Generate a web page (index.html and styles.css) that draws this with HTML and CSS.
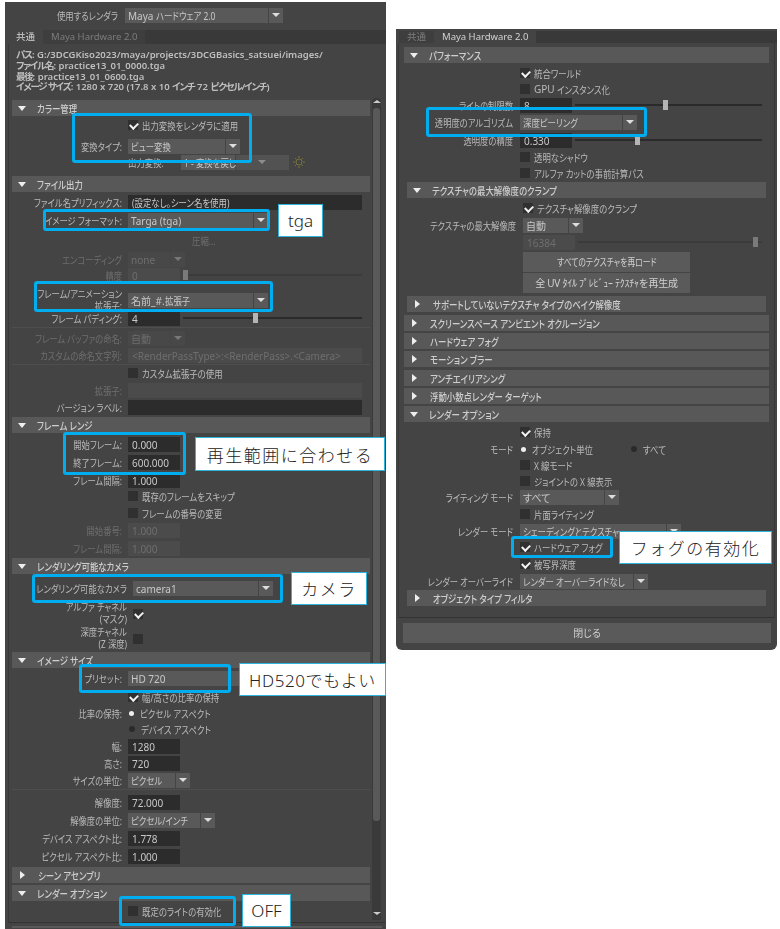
FILE: index.html
```html
<!DOCTYPE html>
<html lang="ja">
<head>
    <meta charset="UTF-8">
    <title>レンダー設定</title>
    <link rel="stylesheet" href="styles.css">
</head>
<body>
<div class="sheet">

    <!-- 共通タブ -->
    <div class="panel panel-left">
        <div class="row renderer">
            <span class="lbl">使用するレンダラ</span>
            <div class="dd w158"><span class="dd-text">Maya <span class="jp">ハードウェア 2.0</span></span><span class="dd-arrow"></span></div>
        </div>
        <div class="tabs">
            <span class="tab tab-on">共通</span>
            <span class="tab">Maya Hardware 2.0</span>
        </div>
        <div class="tab-body">
            <div class="info">
                <div><span class="kn">パス</span>: G:/3DCGKiso2023/maya/projects/3DCGBasics_satsuei/images/</div>
                <div><span class="kn">ファイル名</span>: practice13_01_0000.tga</div>
                <div><span class="kn">最後</span>: practice13_01_0600.tga</div>
                <div><span class="kn">イメージ サイズ</span>: 1280 x 720 (17.8 x 10 <span class="kn">インチ</span> 72 <span class="kn">ピクセル/インチ</span>)</div>
            </div>
            <div class="scroll-area">
                <div class="scroll-content">
                    <div class="hdr"><i class="tri"></i><span>カラー管理</span></div>
                    <div class="row mt1"><div class="ctl"><i class="chk on"></i><span class="jp">出力変換をレンダラに適用</span></div></div>
                    <div class="row mt5"><span class="lbl">変換タイプ:</span><div class="dd w112"><span class="dd-text"><span class="jp">ビュー変換</span></span><span class="dd-arrow"></span></div></div>
                    <div class="row"><div class="ctl"><span class="out-lbl">出力変換:</span><div class="dd dd-split w108"><span class="dd-text"><span class="jp">1 - 変換を戻し</span></span><span class="dd-arrow"></span></div>
                        <svg class="sun" viewBox="0 0 12 12"><circle cx="6" cy="6" r="3" fill="none" stroke="#77743f"/><path d="M6 0v2M6 10v2M0 6h2M10 6h2M2 2l1.400 1.400M8.600 8.600L10 10M2 10l1.400-1.400M8.600 3.400L10 2" stroke="#77743f"/></svg></div></div>

                    <div class="hdr mt6"><i class="tri"></i><span>ファイル出力</span></div>
                    <div class="row mt2"><span class="lbl">ファイル名プリフィックス:</span><div class="field fill"><span class="jp">(設定なし。シーン名を使用)</span></div></div>
                    <div class="row mt2"><span class="lbl">イメージ フォーマット:</span><div class="dd w140"><span class="dd-text">Targa (tga)</span><span class="dd-arrow"></span></div></div>
                    <div class="row mt4"><div class="ctl off press"><span class="jp">圧縮...</span></div></div>
                    <div class="row mt3 off"><span class="lbl">エンコーディング</span><div class="dd dd-off w57"><span class="dd-text">none</span><span class="dd-arrow"></span></div></div>
                    <div class="row off"><span class="lbl">精度</span><div class="ctl"><div class="field field-off num">0</div><div class="slider"><i style="left:0%"></i></div></div></div>
                    <div class="row mt6"><span class="lbl two">フレーム/アニメーション<br>拡張子:</span><div class="dd w140"><span class="dd-text">名前_#.<span class="jp">拡張子</span></span><span class="dd-arrow"></span></div></div>
                    <div class="row mt5"><span class="lbl">フレーム パディング:</span><div class="ctl"><div class="field num">4</div><div class="slider"><i style="left:39%"></i></div></div></div>
                    <hr class="sep">
                    <div class="row mt2 off"><span class="lbl">フレーム バッファの命名:</span><div class="dd dd-off w57"><span class="dd-text">自動</span><span class="dd-arrow"></span></div></div>
                    <div class="row mt1 off"><span class="lbl">カスタムの命名文字列:</span><div class="field field-off fill">&lt;RenderPassType&gt;:&lt;RenderPass&gt;.&lt;Camera&gt;</div></div>
                    <hr class="sep">
                    <div class="row"><div class="ctl"><i class="chk"></i><span class="jp">カスタム拡張子の使用</span></div></div>
                    <div class="row mt1 off"><span class="lbl">拡張子:</span><div class="field field-off fill"></div></div>
                    <div class="row mt1"><span class="lbl">バージョン ラベル:</span><div class="field fill"></div></div>

                    <div class="hdr mt2"><i class="tri"></i><span>フレーム レンジ</span></div>
                    <div class="row mt3"><span class="lbl">開始フレーム:</span><div class="field num">0.000</div></div>
                    <div class="row mt2"><span class="lbl">終了フレーム:</span><div class="field num">600.000</div></div>
                    <div class="row mt2"><span class="lbl">フレーム間隔:</span><div class="field num">1.000</div></div>
                    <div class="row"><div class="ctl"><i class="chk"></i><span class="jp">既存のフレームをスキップ</span></div></div>
                    <div class="row mt1"><div class="ctl"><i class="chk"></i><span class="jp">フレームの番号の変更</span></div></div>
                    <div class="row mt1 off"><span class="lbl">開始番号:</span><div class="field field-off num">1.000</div></div>
                    <div class="row mt2 off"><span class="lbl">フレーム間隔:</span><div class="field field-off num">1.000</div></div>

                    <div class="hdr mt2"><i class="tri"></i><span>レンダリング可能なカメラ</span></div>
                    <div class="row row-wide mt6"><span class="lbl">レンダリング可能なカメラ</span><div class="dd w140"><span class="dd-text">camera1</span><span class="dd-arrow"></span></div></div>
                    <div class="row row-wide mt6"><span class="lbl two">アルファ チャネル<br>(マスク)</span><div class="ctl"><i class="chk on"></i></div></div>
                    <div class="row row-wide mt9"><span class="lbl two">深度チャネル<br>(Z 深度)</span><div class="ctl"><i class="chk"></i></div></div>

                    <div class="hdr mt9"><i class="tri"></i><span>イメージ サイズ</span></div>
                    <div class="row mt2"><span class="lbl">プリセット:</span><div class="dd w140"><span class="dd-text">HD 720</span><span class="dd-arrow"></span></div></div>
                    <div class="row mt3"><div class="ctl"><i class="chk on"></i><span class="jp">幅/高さの比率の保持</span></div></div>
                    <div class="row"><span class="lbl">比率の保持:</span><div class="ctl"><i class="radio on"></i><span class="jp">ピクセル アスペクト</span></div></div>
                    <div class="row"><div class="ctl"><i class="radio"></i><span class="jp">デバイス アスペクト</span></div></div>
                    <div class="row mt1"><span class="lbl">幅:</span><div class="field num">1280</div></div>
                    <div class="row mt1"><span class="lbl">高さ:</span><div class="field num">720</div></div>
                    <div class="row mt1"><span class="lbl">サイズの単位:</span><div class="dd w62"><span class="dd-text"><span class="jp">ピクセル</span></span><span class="dd-arrow"></span></div></div>
                    <hr class="sep">
                    <div class="row mt4"><span class="lbl">解像度:</span><div class="field num">72.000</div></div>
                    <div class="row mt2"><span class="lbl">解像度の単位:</span><div class="dd w87"><span class="dd-text"><span class="jp">ピクセル/インチ</span></span><span class="dd-arrow"></span></div></div>
                    <div class="row mt2"><span class="lbl">デバイス アスペクト比:</span><div class="field num">1.778</div></div>
                    <div class="row mt2"><span class="lbl">ピクセル アスペクト比:</span><div class="field num">1.000</div></div>

                    <div class="hdr mt3"><i class="tri tri-closed"></i><span>シーン アセンブリ</span></div>
                    <div class="hdr mt2"><i class="tri"></i><span>レンダー オプション</span></div>
                    <div class="row mt2"><div class="ctl"><i class="chk"></i><span class="jp">既定のライトの有効化</span></div></div>
                </div>
                <div class="scrollbar">
                    <i class="sb-up"></i>
                    <div class="sb-thumb"></div>
                    <i class="sb-down"></i>
                </div>
            </div>
        </div>
        <div class="close-peek"></div>
    </div>

    <!-- Maya Hardware 2.0 タブ -->
    <div class="panel panel-right">
        <div class="tabs">
            <span class="tab">共通</span>
            <span class="tab tab-on">Maya Hardware 2.0</span>
        </div>
        <div class="tab-body">
            <div class="hdr"><i class="tri"></i><span>パフォーマンス</span></div>
            <div class="row mt2"><div class="ctl"><i class="chk on"></i><span class="jp">統合ワールド</span></div></div>
            <div class="row"><div class="ctl"><i class="chk"></i>GPU&nbsp;<span class="jp">インスタンス化</span></div></div>
            <div class="row"><span class="lbl">ライトの制限数</span><div class="ctl"><div class="field num">8</div><div class="slider"><i style="left:47%"></i></div></div></div>
            <div class="row mt1"><span class="lbl">透明度のアルゴリズム</span><div class="dd w117"><span class="dd-text"><span class="jp">深度ピーリング</span></span><span class="dd-arrow"></span></div></div>
            <div class="row mt2"><span class="lbl">透明度の精度</span><div class="ctl"><div class="field num">0.330</div><div class="slider"><i style="left:32%"></i></div></div></div>
            <div class="row mt1"><div class="ctl"><i class="chk"></i><span class="jp">透明なシャドウ</span></div></div>
            <div class="row"><div class="ctl"><i class="chk"></i><span class="jp">アルファ カットの事前計算パス</span></div></div>

            <div class="nested">
                <div class="hdr mt1"><i class="tri"></i><span>テクスチャの最大解像度のクランプ</span></div>
                <div class="row mt2"><div class="ctl"><i class="chk on"></i><span class="jp">テクスチャ解像度のクランプ</span></div></div>
                <div class="row mt1"><span class="lbl">テクスチャの最大解像度</span><div class="dd w60"><span class="dd-text">自動</span><span class="dd-arrow"></span></div></div>
                <div class="row mt1 off"><div class="ctl"><div class="field field-off num">16384</div><div class="slider"><i style="left:95%"></i></div></div></div>
                <div class="row row-btn mt2"><div class="btn"><span class="jp-btn">すべてのテクスチャを再ロード</span></div></div>
                <div class="row row-btn mt1"><div class="btn btn-half">全 UV ﾀｲﾙ ﾌﾟﾚﾋﾞｭｰ ﾃｸｽﾁｬを再生成</div></div>
                <div class="hdr mt3"><i class="tri tri-closed"></i><span>サポートしていないテクスチャ タイプのベイク解像度</span></div>
            </div>

            <div class="hdr mt3"><i class="tri tri-closed"></i><span>スクリーンスペース アンビエント オクルージョン</span></div>
            <div class="hdr mt2"><i class="tri tri-closed"></i><span>ハードウェア フォグ</span></div>
            <div class="hdr mt2"><i class="tri tri-closed"></i><span>モーション ブラー</span></div>
            <div class="hdr mt3"><i class="tri tri-closed"></i><span>アンチエイリアシング</span></div>
            <div class="hdr mt2"><i class="tri tri-closed"></i><span>浮動小数点レンダー ターゲット</span></div>
            <div class="hdr mt2"><i class="tri"></i><span>レンダー オプション</span></div>
            <div class="row mt2"><div class="ctl"><i class="chk on"></i><span class="jp">保持</span></div></div>
            <div class="row mt1"><span class="lbl">モード</span><div class="ctl"><i class="radio on"></i><span class="jp mode-a">オブジェクト単位</span><i class="radio"></i><span class="jp">すべて</span></div></div>
            <div class="row"><div class="ctl"><i class="chk"></i><span class="jp">X 線モード</span></div></div>
            <div class="row"><div class="ctl"><i class="chk"></i><span class="jp">ジョイントの X 線表示</span></div></div>
            <div class="row"><span class="lbl">ライティング モード</span><div class="dd w99"><span class="dd-text">すべて</span><span class="dd-arrow"></span></div></div>
            <div class="row mt1"><div class="ctl"><i class="chk"></i><span class="jp">片面ライティング</span></div></div>
            <div class="row mt1"><span class="lbl">レンダー モード</span><div class="dd w161"><span class="dd-text"><span class="jp">シェーディングとテクスチャ</span></span><span class="dd-arrow"></span></div></div>
            <div class="row"><div class="ctl"><i class="chk on"></i><span class="jp">ハードウェア フォグ</span></div></div>
            <div class="row mt1"><div class="ctl"><i class="chk on"></i><span class="jp">被写界深度</span></div></div>
            <div class="row mt1"><span class="lbl">レンダー オーバーライド</span><div class="dd w128"><span class="dd-text"><span class="jp">レンダー オーバーライドなし</span></span><span class="dd-arrow"></span></div></div>
            <div class="nested">
                <div class="hdr mt1"><i class="tri tri-closed"></i><span>オブジェクト タイプ フィルタ</span></div>
            </div>
        </div>
        <div class="close-btn">閉じる</div>
    </div>

    <!-- 注釈 -->
    <div class="mark mark-color"></div>
    <div class="mark mark-format"></div>
    <div class="mark mark-ext"></div>
    <div class="mark mark-range"></div>
    <div class="mark mark-camera"></div>
    <div class="mark mark-preset"></div>
    <div class="mark mark-light"></div>
    <div class="mark mark-algo"></div>
    <div class="mark mark-fog"></div>

    <div class="note note-tga">tga</div>
    <div class="note note-range">再生範囲に合わせる</div>
    <div class="note note-camera">カメラ</div>
    <div class="note note-hd">HD520でもよい</div>
    <div class="note note-off">OFF</div>
    <div class="note note-fog">フォグの有効化</div>
</div>
</body>
</html>
```

FILE: styles.css
```css
* {
    box-sizing: border-box;
}
body {
    margin: 0;
    background: #fff;
    font-family: "Noto Sans", "Noto Sans CJK JP", sans-serif;
    font-feature-settings: "palt";
    font-size: 10px;
    color: #bababa;
}
.sheet {
    position: relative;
    width: 780px;
    height: 929px;
    overflow: hidden;
    display: flex;
    align-items: flex-start;
}
.panel {
    background: #444;
    width: 381px;
    filter: blur(0.35px);
}
.panel-left {
    margin: 2px 0 0 5px;
    height: 927px;
    padding-top: 5px;
    --lw: 110px;
    --gap: 6px;
}
.panel-right {
    margin: 29px 0 0 10px;
    height: 621px;
    padding-top: 2px;
    border-radius: 0 0 6px 6px;
    --lw: 109px;
    --gap: 7px;
}

/* Maya's UI font is much narrower than Noto for kana */
.jp, .jp-btn, .hdr span, .out-lbl {
    display: inline-block;
    transform-origin: left center;
    transform: scaleX(0.84);
}
.jp-btn {
    transform-origin: center;
    transform: scaleX(0.78);
}
.hdr span {
    transform: scaleX(0.8);
}
.kn {
    letter-spacing: -1.2px;
}

/* tabs */
.tabs {
    display: flex;
    background: #393939;
    font-size: 9.5px;
    line-height: 14px;
    height: 14px;
    margin-left: 3px;
}
.panel-left .tabs {
    margin-top: 7px;
}
.panel-right .tabs {
    height: 12px;
    line-height: 12px;
}
.tab {
    padding: 0 8px;
    color: #7c7c7c;
    background: #3e3e3e;
}
.tab-on {
    background: #444;
    color: #d2d2d2;
}
.tab-body {
    margin-left: 3px;
    border-left: 1px solid #383838;
}
.panel-left .tab-body {
    width: 377px;
    height: 879px;
    border-bottom: 1px solid #333;
}
.panel-right .tab-body {
    margin-left: 2px;
    width: 377px;
    height: 575px;
    padding: 4px 5px 0;
    border-right: 1px solid #383838;
    border-bottom: 1px solid #333;
}
.info {
    padding: 6px 0 0 7px;
    font-size: 9.5px;
    font-weight: 600;
    line-height: 10.75px;
    color: #bfbfbf;
    white-space: nowrap;
}
.scroll-area {
    display: flex;
    margin: 5px 0 0 3px;
}
.scroll-content {
    width: 358px;
    padding-top: 2px;
}
.scrollbar {
    width: 9px;
    height: 822px;
    margin-left: 2px;
    background: #3a3a3a;
    border-radius: 4px 4px 0 0;
    display: flex;
    flex-direction: column;
    align-items: center;
}
.sb-thumb {
    width: 7px;
    height: 713px;
    margin-top: 5px;
    background: #595959;
    border-radius: 3px;
}
.sb-up, .sb-down {
    width: 0;
    height: 0;
    border-left: 4px solid transparent;
    border-right: 4px solid transparent;
}
.sb-up {
    margin-top: 2px;
    border-bottom: 3px solid #ccc;
}
.sb-down {
    margin-top: 91px;
    border-top: 3px solid #ccc;
}
.close-peek {
    height: 2px;
    margin: 3px 4px 0 7px;
    background: #5a5a5a;
}

/* section bars */
.hdr {
    height: 16px;
    background: #585858;
    display: flex;
    align-items: center;
    padding-left: 6px;
    font-size: 10.5px;
    font-weight: 500;
    color: #cecece;
    white-space: nowrap;
}
.tri {
    width: 0;
    height: 0;
    margin-right: 11px;
    border-left: 4px solid transparent;
    border-right: 4px solid transparent;
    border-top: 5px solid #eee;
}
.tri-closed {
    margin: 0 13px 0 2px;
    border-top: 4px solid transparent;
    border-bottom: 4px solid transparent;
    border-left: 5px solid #eee;
    border-right: 0;
}
.nested {
    margin: 0 3px;
}

/* rows */
.row {
    display: grid;
    grid-template-columns: var(--lw) 1fr;
    column-gap: var(--gap);
    align-items: center;
    height: 16px;
    padding-right: 8px;
    white-space: nowrap;
}
.panel-right .row {
    padding-right: 7px;
}
.panel-right .nested .row {
    padding-right: 4px;
}
.renderer {
    --lw: 113px;
    --gap: 7px;
}
.row-wide {
    --lw: 115px;
}
.row-btn {
    height: 20px;
}
.lbl {
    grid-column: 1;
    text-align: right;
    transform-origin: right center;
    transform: scaleX(0.83);
}
.two {
    line-height: 11.5px;
}
.ctl {
    grid-column: 2;
    display: flex;
    align-items: center;
}
.out-lbl {
    width: 53px;
    flex: none;
}
.sun {
    width: 12px;
    height: 12px;
    margin-left: 4px;
}
.off, .off .lbl {
    color: #6e6e6e;
}
.press {
    justify-content: center;
    padding-right: 78px;
}

/* inputs */
.dd {
    grid-column: 2;
    display: flex;
    height: 15px;
    gap: 1px;
    line-height: 16px;
    color: #c8c8c8;
}
.dd-text {
    flex: 1;
    min-width: 0;
    background: #595959;
    padding-left: 3px;
}
.dd-arrow {
    width: 14px;
    background: #595959;
    position: relative;
}
.dd-arrow::after {
    content: "";
    position: absolute;
    left: 3px;
    top: 5px;
    border-left: 4px solid transparent;
    border-right: 4px solid transparent;
    border-top: 4px solid #ddd;
}
.dd-off {
    color: #6e6e6e;
}
.dd-off .dd-text, .dd-off .dd-arrow {
    background: #484848;
}
.dd-off .dd-arrow::after {
    border-top-color: #777;
}
.dd-split .dd-text {
    flex: none;
    width: 54px;
}
.dd-split .dd-arrow {
    flex: 1;
    background: #525252;
}
.dd-split .dd-arrow::after {
    left: 22px;
    border-top-color: #8c8c8c;
}
.w57 { width: 57px; }
.w60 { width: 60px; }
.w62 { width: 62px; }
.w87 { width: 87px; }
.w99 { width: 99px; }
.w108 { width: 108px; }
.w112 { width: 112px; }
.w117 { width: 117px; }
.w128 { width: 128px; }
.w140 { width: 140px; }
.w158 { width: 158px; }
.w161 { width: 161px; }
.field {
    grid-column: 2;
    height: 15px;
    line-height: 16px;
    padding-left: 4px;
    background: #2c2c2c;
    color: #c8c8c8;
    overflow: hidden;
}
.field-off {
    background: #4b4b4b;
    color: #6e6e6e;
}
.num {
    width: 52px;
    flex: none;
}
.fill {
    width: 100%;
}
.slider {
    position: relative;
    flex: 1;
    height: 2px;
    margin-left: 3px;
    background: #2a2a2a;
}
.off .slider {
    background: #3b3b3b;
}
.slider i {
    position: absolute;
    top: -4px;
    width: 5px;
    height: 10px;
    background: #b5b5b5;
}
.off .slider i {
    background: #7a7a7a;
}
.chk {
    position: relative;
    flex: none;
    width: 10px;
    height: 10px;
    margin-right: 4px;
    background: #303030;
}
.chk.on::after {
    content: "";
    position: absolute;
    left: 2px;
    top: 2px;
    width: 6px;
    height: 4px;
    border-left: 2px solid #f2f2f2;
    border-bottom: 2px solid #f2f2f2;
    transform: rotate(-45deg);
}
.radio {
    flex: none;
    width: 6px;
    height: 6px;
    margin: 0 6px 0 1px;
    border-radius: 50%;
    background: #2a2a2a;
}
.radio.on {
    width: 5px;
    height: 5px;
    background: #eee;
}
.mode-a {
    width: 98px;
}
.btn {
    grid-column: 2;
    width: 167px;
    height: 20px;
    line-height: 20px;
    text-align: center;
    background: #5a5a5a;
    color: #d0d0d0;
}
.btn-half {
    font-feature-settings: normal;
    letter-spacing: -0.25px;
}
.close-btn {
    width: 368px;
    height: 20px;
    margin: 5px 0 0 7px;
    line-height: 20px;
    text-align: center;
    background: #5a5a5a;
    color: #d0d0d0;
}
.sep {
    height: 1px;
    margin: 1px 0 0;
    border: 0;
    background: #4e4e4e;
}

.mt1 { margin-top: 1px; }
.mt2 { margin-top: 2px; }
.mt3 { margin-top: 3px; }
.mt4 { margin-top: 4px; }
.mt5 { margin-top: 5px; }
.mt6 { margin-top: 6px; }
.mt9 { margin-top: 9px; }

/* blue call-outs drawn over the screenshot */
.mark {
    position: absolute;
    border: 3px solid #00aeef;
    border-radius: 3px;
}
.mark-color { left: 72px; top: 113px; width: 180px; height: 50px; }
.mark-format { left: 43px; top: 209px; width: 227px; height: 22px; }
.mark-ext { left: 34px; top: 281px; width: 239px; height: 31px; }
.mark-range { left: 63px; top: 432px; width: 123px; height: 43px; }
.mark-camera { left: 32px; top: 574px; width: 251px; height: 29px; }
.mark-preset { left: 79px; top: 664px; width: 152px; height: 29px; }
.mark-light { left: 119px; top: 896px; width: 117px; height: 30px; }
.mark-algo { left: 426px; top: 107px; width: 221px; height: 30px; }
.mark-fog { left: 511px; top: 536px; width: 102px; height: 22px; }

.note {
    position: absolute;
    display: flex;
    align-items: center;
    justify-content: center;
    background: #fff;
    border: 1px solid #2fb4dc;
    color: #222;
    font-size: 17px;
    font-weight: 300;
    font-feature-settings: normal;
    letter-spacing: 1.5px;
    white-space: nowrap;
}
.note-tga { left: 278px; top: 204px; width: 45px; height: 33px; letter-spacing: 0; }
.note-range { left: 195px; top: 437px; width: 190px; height: 34px; }
.note-camera { left: 291px; top: 572px; width: 76px; height: 33px; }
.note-hd { left: 239px; top: 663px; width: 147px; height: 33px; letter-spacing: 0.6px; }
.note-off { left: 242px; top: 894px; width: 49px; height: 33px; letter-spacing: 0; }
.note-fog { left: 619px; top: 531px; width: 153px; height: 33px; }
```
